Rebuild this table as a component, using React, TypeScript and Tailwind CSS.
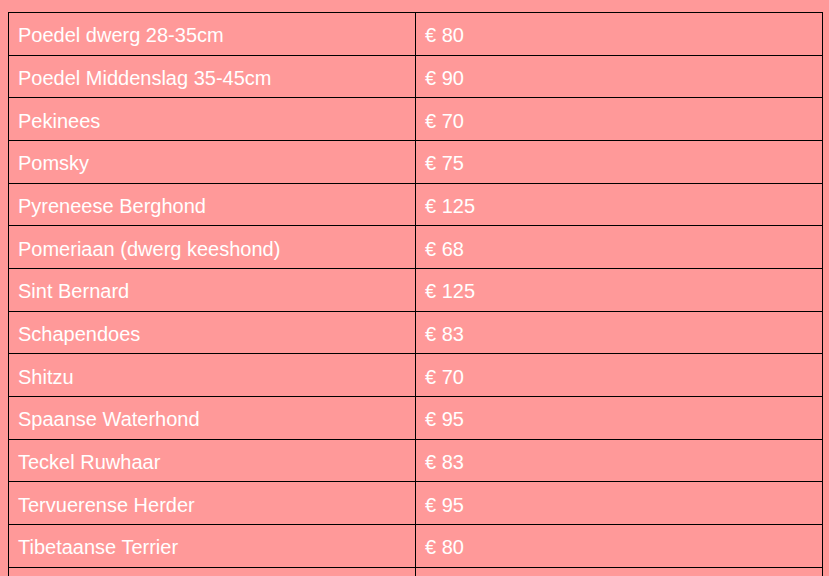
import React from 'react';

const rows: [string, string][] = [
  ['Poedel dwerg 28-35cm', '€ 80'],
  ['Poedel Middenslag 35-45cm', '€ 90'],
  ['Pekinees', '€ 70'],
  ['Pomsky', '€ 75'],
  ['Pyreneese Berghond', '€ 125'],
  ['Pomeriaan (dwerg keeshond)', '€ 68'],
  ['Sint Bernard', '€ 125'],
  ['Schapendoes', '€ 83'],
  ['Shitzu', '€ 70'],
  ['Spaanse Waterhond', '€ 95'],
  ['Teckel Ruwhaar', '€ 83'],
  ['Tervuerense Herder', '€ 95'],
  ['Tibetaanse Terrier', '€ 80'],
  ['Welsh Terrier', '€ 80'],
];

export default function App() {
  return (
    <div
      className="min-h-screen bg-[#ff9999] pt-3 pl-2 pr-[6px] overflow-hidden"
      style={{ fontFamily: '"Liberation Sans", Arial, sans-serif' }}
    >
      <table className="w-full border-collapse table-fixed text-white text-[20px] leading-[23px]">
        <tbody>
          {rows.map(([breed, price]) => (
            <tr key={breed} className="h-[42.67px]">
              <td className="border border-black px-[9px] pt-[4px] pb-0 align-middle">{breed}</td>
              <td className="border border-black px-[9px] pt-[4px] pb-0 align-middle">{price}</td>
            </tr>
          ))}
        </tbody>
      </table>
    </div>
  );
}
